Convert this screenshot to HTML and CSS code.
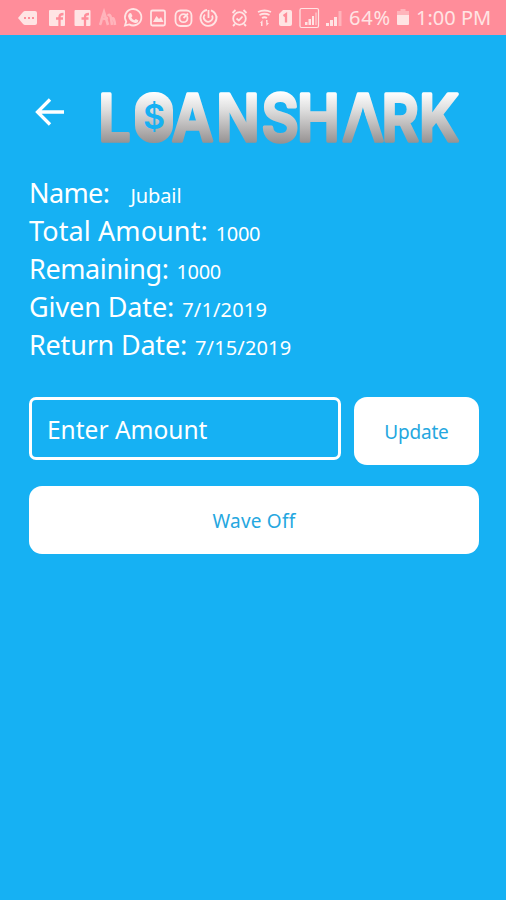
FILE: index.html
```html
<!DOCTYPE html>
<html lang="en">
<head>
<meta charset="utf-8">
<meta name="viewport" content="width=device-width, initial-scale=1">
<title>Loanshark</title>
<link rel="stylesheet" href="styles.css">
</head>
<body>
<div class="status">
  <svg class="status-icons" viewBox="0 0 344 35" width="344" height="35" aria-hidden="true">
    <path class="fill" d="M18 18l5-6q1-1 2-1h10q2 0 2 2v10q0 2-2 2H25q-1 0-2-1z"/>
    <path class="cut" d="M24 17h2v2h-2zM28 17h2v2h-2zM32 17h2v2h-2z"/>
    <g id="fb">
      <rect class="fill" x="49" y="10" width="16" height="16" rx="1"/>
      <path class="cut-line" d="M59.500 26v-9q0-3 4-3M56 18.500h7"/>
    </g>
    <use href="#fb" x="25.500"/>
    <path class="line faint bold" d="M100 25q1-2 2-7l2-6 4 13M103 19l5-1M108 16q2-3 3 2l1 7M112 19q2-3 3 6"/>
    <path class="line" d="M125 25.500l1.200-4a8.200 8.200 0 1 1 3 2.900z"/>
    <path class="fill" d="M129 13.500l2-.5 1.500 3-1.200 1.500q1 2 3 2.800l1.500-1.300 2.700 1.500q-.5 3-3.500 2.500-6-1.500-7-7z"/>
    <rect class="line" x="151" y="10.500" width="14" height="15" rx="1.500"/>
    <path class="fill" d="M153 22l3.500-6 2.500 3 2-2 2.500 5z"/>
    <rect class="line" x="175.500" y="10.500" width="16" height="15.500" rx="5"/>
    <circle class="line" cx="183.500" cy="18.200" r="4"/>
    <path class="line" d="M183.500 18l4.500-4.500"/>
    <path class="line" d="M207 10a8 8 0 1 0 4 .3M205 14.500a4.300 4.300 0 1 0 7 1M208.500 10v8M213 11.500q3 2 4 6"/>
    <circle class="line" cx="239.500" cy="18.500" r="6.300"/>
    <path class="line" d="M236.500 18.500l2.300 2 3.700-4M232.500 13l3-3M246.500 13l-3-3M235 24l-2 2M244 24l2 2"/>
    <path class="line" d="M258 12q6.500-3 13 0M259.500 15q5-2.500 10 0M262 18q2.500-1.500 5 0"/>
    <path class="fill" d="M260 23l2.500-3v6h-1.500v-3zM266 20h1.500v3h1.500l-2.500 3z"/>
    <path class="fill" d="M283 10h7q2 0 2 2v12q0 2-2 2h-9q-2 0-2-2V14z"/>
    <path class="cut-line" d="M283.500 16l2.500-1.800V22.500"/>
    <rect class="line thin" x="300" y="8.500" width="18.500" height="19" rx="1.500"/>
    <path class="fill" d="M305 25v-3h2.500v3zM308.500 25v-6h2.500v6zM312 25v-9h2v9z"/>
    <path class="fill faint" d="M315 25V12.500h2V25z"/>
    <path class="fill" d="M326 26v-3h3v3zM330 26v-6h3v6zM334 26v-9h3v9z"/>
    <path class="fill faint" d="M338.500 26V11h3v15z"/>
  </svg>
  <span class="percent">64%</span>
  <svg class="battery" viewBox="0 0 12 17" width="12" height="17" aria-hidden="true">
    <path class="fill faint" d="M3.500 0h5v2H12v5H0V2h3.500z"/>
    <path class="fill" d="M0 6h12v9q0 1-1 1H1q-1 0-1-1z"/>
  </svg>
  <span class="clock">1:00 PM</span>
</div>

<header class="header">
  <svg class="back" viewBox="0 0 30 30" width="30" height="30" role="img" aria-label="Back">
    <path d="M29 15H2.500M15 2.500L2.500 15 15 27.500"/>
  </svg>
  <svg class="logo" viewBox="0 0 372 56" width="372" height="56" role="img" aria-label="Loanshark">
    <defs>
      <linearGradient id="metal" gradientUnits="userSpaceOnUse" x1="0" y1="3" x2="0" y2="54">
        <stop offset="0" stop-color="#fff"/>
        <stop offset=".35" stop-color="#dedede"/>
        <stop offset="1" stop-color="#969292"/>
      </linearGradient>
    </defs>
    <g transform="scale(.87 1)">
      <text class="wordmark" y="52" x="-.5">L</text>
      <text class="wordmark" y="52" x="84 135 187 228 280 325 368">ANSHARK</text>
    </g>
    <rect class="coin" x="36" y="3" width="38" height="51" rx="18"/>
    <text class="dollar" x="55" y="40" text-anchor="middle">$</text>
    <path class="notch" d="M264 20l12 35h-24z"/>
  </svg>
</header>

<main class="content">
  <dl class="details">
    <div class="row"><dt class="l1">Name:</dt><dd class="v1">Jubail</dd></div>
    <div class="row"><dt class="l2">Total Amount:</dt><dd class="v2">1000</dd></div>
    <div class="row"><dt class="l3">Remaining:</dt><dd class="v3">1000</dd></div>
    <div class="row"><dt class="l4">Given Date:</dt><dd class="v4">7/1/2019</dd></div>
    <div class="row"><dt class="l5">Return Date:</dt><dd class="v5">7/15/2019</dd></div>
  </dl>
  <div class="form">
    <div class="field">Enter Amount</div>
    <button class="button update">Update</button>
  </div>
  <button class="button wave">Wave Off</button>
</main>
</body>
</html>
```
FILE: styles.css
```css
* { box-sizing: border-box; }
body {
  margin: 0;
  min-height: 900px;
  background: #16b1f3;
  color: #fff;
  font-family: "Noto Sans", sans-serif;
}
.status {
  display: flex;
  align-items: center;
  height: 35px;
  background: #ff8d9a;
  color: #ffe4e4;
  font-size: 20px;
  line-height: 37px;
  white-space: nowrap;
}
.status-icons { flex: none; }
.fill { fill: #ffe4e4; }
.line { fill: none; stroke: #ffe4e4; stroke-width: 1.8; }
.thin { stroke-width: 1.2; }
.bold { stroke-width: 2.6; }
.faint { opacity: .45; }
.cut { fill: #ff8d9a; }
.cut-line { fill: none; stroke: #ff8d9a; stroke-width: 2.3; }
.percent { width: 53px; padding-left: 5px; letter-spacing: .8px; }
.clock { padding-left: 7px; }
.header {
  display: flex;
  align-items: flex-start;
  height: 137px;
  padding: 54px 0 0 35px;
}
.back { flex: none; margin-top: 8px; fill: none; stroke: #fff; stroke-width: 3.3; }
.logo { flex: none; margin-left: 34px; overflow: visible; }
.wordmark {
  font: 600 65px Inter, sans-serif;
  fill: url(#metal);
  stroke: url(#metal);
  stroke-width: 3.6;
  stroke-linejoin: round;
}
.coin { fill: url(#metal); }
.dollar { font: 600 34px Inter, sans-serif; fill: #16b1f3; }
.notch { fill: #16b1f3; }
.content { padding: 2px 27px 0 29px; }
.details { margin: 0; }
.row { display: flex; align-items: baseline; height: 38px; line-height: 38px; white-space: nowrap; }
dt { font-size: 27px; }
dd { margin: 0 0 0 8px; font-size: 20px; }
.l1 { letter-spacing: -.6px; }
.l2 { letter-spacing: .1px; }
.l3 { letter-spacing: -.4px; }
.l4 { letter-spacing: -.1px; }
.l5 { letter-spacing: -.2px; }
.v1 { margin-left: 21px; letter-spacing: -.1px; }
.v2 { letter-spacing: -.4px; }
.v3 { letter-spacing: -.4px; }
.v4, .v5 { letter-spacing: .15px; }
.form { display: flex; align-items: flex-start; gap: 13px; margin-top: 33px; }
.field {
  width: 312px;
  height: 63px;
  padding-left: 15px;
  border: 3px solid #fff;
  border-radius: 7px;
  font-size: 24.5px;
  line-height: 60px;
}
.button {
  display: block;
  height: 68px;
  padding: 2px 0 0;
  border: 0;
  border-radius: 13px;
  background: #fff;
  color: #25a7e0;
  font: 19px "Noto Sans", sans-serif;
}
.update { width: 125px; letter-spacing: -.2px; }
.wave { width: 450px; margin-top: 21px; letter-spacing: .2px; }
```
